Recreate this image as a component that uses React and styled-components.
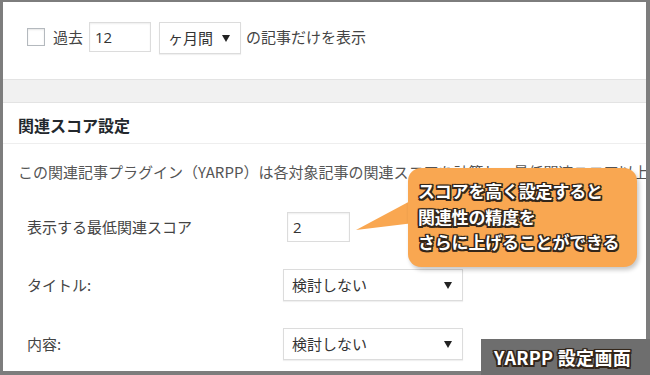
import React from 'react'
import styled, { createGlobalStyle } from 'styled-components'

const GlobalStyle = createGlobalStyle`
  html, body {
    margin: 0;
    padding: 0;
    background: #fff;
    overflow: hidden;
  }
  body {
    font-family: "Noto Sans CJK JP", "Noto Sans", sans-serif;
  }
`

const ink = '#33261a'
const outline = `
  -1.5px -1.5px 0 ${ink}, 1.5px -1.5px 0 ${ink}, -1.5px 1.5px 0 ${ink}, 1.5px 1.5px 0 ${ink},
  0 -1.5px 0 ${ink}, 0 1.5px 0 ${ink}, -1.5px 0 0 ${ink}, 1.5px 0 0 ${ink},
  0 0 2px ${ink}
`

function Arrow() {
  return (
    <svg width="8" height="7" viewBox="0 0 8 7">
      <polygon points="0,0 8,0 4,7" fill="#222" />
    </svg>
  )
}

export default function App() {
  return (
    <Page>
      <GlobalStyle />
      <Frame>
        <TopSection>
          <CheckBox />
          <Label>過去</Label>
          <TextInput width={62} height={30}>12</TextInput>
          <Select width={82}>
            <span>ヶ月間</span>
            <Arrow />
          </Select>
          <Label>の記事だけを表示</Label>
        </TopSection>
        <Band />
        <BoxHeader>関連スコア設定</BoxHeader>
        <Description>
          この関連記事プラグイン（YARPP）は各対象記事の関連スコアを計算し、最低関連スコア以上の記事を表示します。
        </Description>
        <Form>
          <RowLabel>表示する最低関連スコア</RowLabel>
          <div>
            <TextInput width={63} height={30} offset={4}>2</TextInput>
          </div>
          <RowLabel>タイトル:</RowLabel>
          <Select width={180}>
            <span>検討しない</span>
            <Arrow />
          </Select>
          <RowLabel>内容:</RowLabel>
          <Select width={180}>
            <span>検討しない</span>
            <Arrow />
          </Select>
        </Form>
      </Frame>

      <Tail width="60" height="40" viewBox="0 0 60 40">
        <polygon points="0,33 58,2 58,26" fill="#f9a751" />
      </Tail>
      <Callout>
        スコアを高く設定すると<br />
        関連性の精度を<br />
        さらに上げることができる
      </Callout>
      <Caption>YARPP 設定画面</Caption>
    </Page>
  )
}

const Page = styled.div`
  position: relative;
  width: 650px;
  height: 375px;
  overflow: hidden;
`

const Frame = styled.div`
  box-sizing: border-box;
  width: 650px;
  height: 375px;
  border: solid #7d7d7d;
  border-width: 2px 4px 4px 3px;
  background: #fff;
  display: flex;
  flex-direction: column;
  overflow: hidden;
`

const TopSection = styled.div`
  height: 77px;
  box-sizing: border-box;
  padding: 20px 0 0 24px;
  display: flex;
  align-items: flex-start;
`

const CheckBox = styled.div`
  width: 18px;
  height: 18px;
  box-sizing: border-box;
  margin-top: 6px;
  border: 1px solid #b4b9be;
  background: #fff;
  box-shadow: inset 0 1px 2px rgba(0, 0, 0, 0.1);
  margin-right: 8px;
`

const Label = styled.span`
  font-size: 15px;
  line-height: 30px;
  color: #444;
  margin-right: 6px;
`

const TextInput = styled.div`
  box-sizing: border-box;
  width: ${p => p.width}px;
  height: ${p => p.height}px;
  margin-left: ${p => p.offset || 0}px;
  margin-right: 8px;
  padding-left: 5px;
  border: 1px solid #dcdcdc;
  box-shadow: inset 0 1px 2px rgba(0, 0, 0, 0.07);
  background: #fff;
  font-family: "Open Sans", "Noto Sans CJK JP", sans-serif;
  font-size: 15px;
  line-height: 28px;
  color: #333;
`

const Select = styled.div`
  box-sizing: border-box;
  width: ${p => p.width}px;
  height: 32px;
  padding: 0 10px 0 8px;
  border: 1px solid #dcdcdc;
  box-shadow: 0 1px 1px rgba(0, 0, 0, 0.06);
  background: #fff;
  display: flex;
  align-items: center;
  justify-content: space-between;
  margin-right: 5px;
  font-size: 15px;
  color: #333;
  span {
    margin-top: -1px;
  }
`

const Band = styled.div`
  height: 22px;
  background: #f1f1f1;
  border-top: 1px solid #e3e3e3;
  border-bottom: 1px solid #e3e3e3;
`

const BoxHeader = styled.h3`
  margin: 0;
  height: 41px;
  box-sizing: border-box;
  padding: 10px 15px 0;
  border-bottom: 1px solid #eeeeee;
  font-size: 16px;
  font-weight: 700;
  line-height: 24px;
  color: #23282d;
`

const Description = styled.p`
  margin: 16px 0 0 15px;
  font-size: 15px;
  line-height: 24px;
  color: #555;
  white-space: nowrap;
`

const Form = styled.div`
  margin-top: 28px;
  padding-left: 24px;
  display: grid;
  grid-template-columns: 256px 180px;
  row-gap: 27px;
  align-items: center;
`

const RowLabel = styled.div`
  font-size: 15px;
  color: #444;
  line-height: 24px;
`

const Callout = styled.div`
  position: absolute;
  left: 408px;
  top: 168px;
  width: 229px;
  height: 99px;
  box-sizing: border-box;
  padding: 10px 0 0 10px;
  border-radius: 13px;
  background: #f9a751;
  box-shadow: 2px 3px 4px rgba(0, 0, 0, 0.22);
  color: #fff;
  font-size: 17px;
  font-weight: 700;
  line-height: 25.5px;
  letter-spacing: -0.2px;
  white-space: nowrap;
  text-shadow: ${outline};
`

const Tail = styled.svg`
  position: absolute;
  left: 356px;
  top: 197px;
`

const Caption = styled.div`
  position: absolute;
  right: 0;
  bottom: 0;
  width: 169px;
  height: 36px;
  box-sizing: border-box;
  padding-left: 13px;
  background: #6e6e6e;
  color: #fff;
  font-family: "Noto Sans CJK JP", sans-serif;
  font-size: 18px;
  font-weight: 700;
  line-height: 36px;
  letter-spacing: 0.3px;
  white-space: nowrap;
  text-shadow: ${outline};
`
